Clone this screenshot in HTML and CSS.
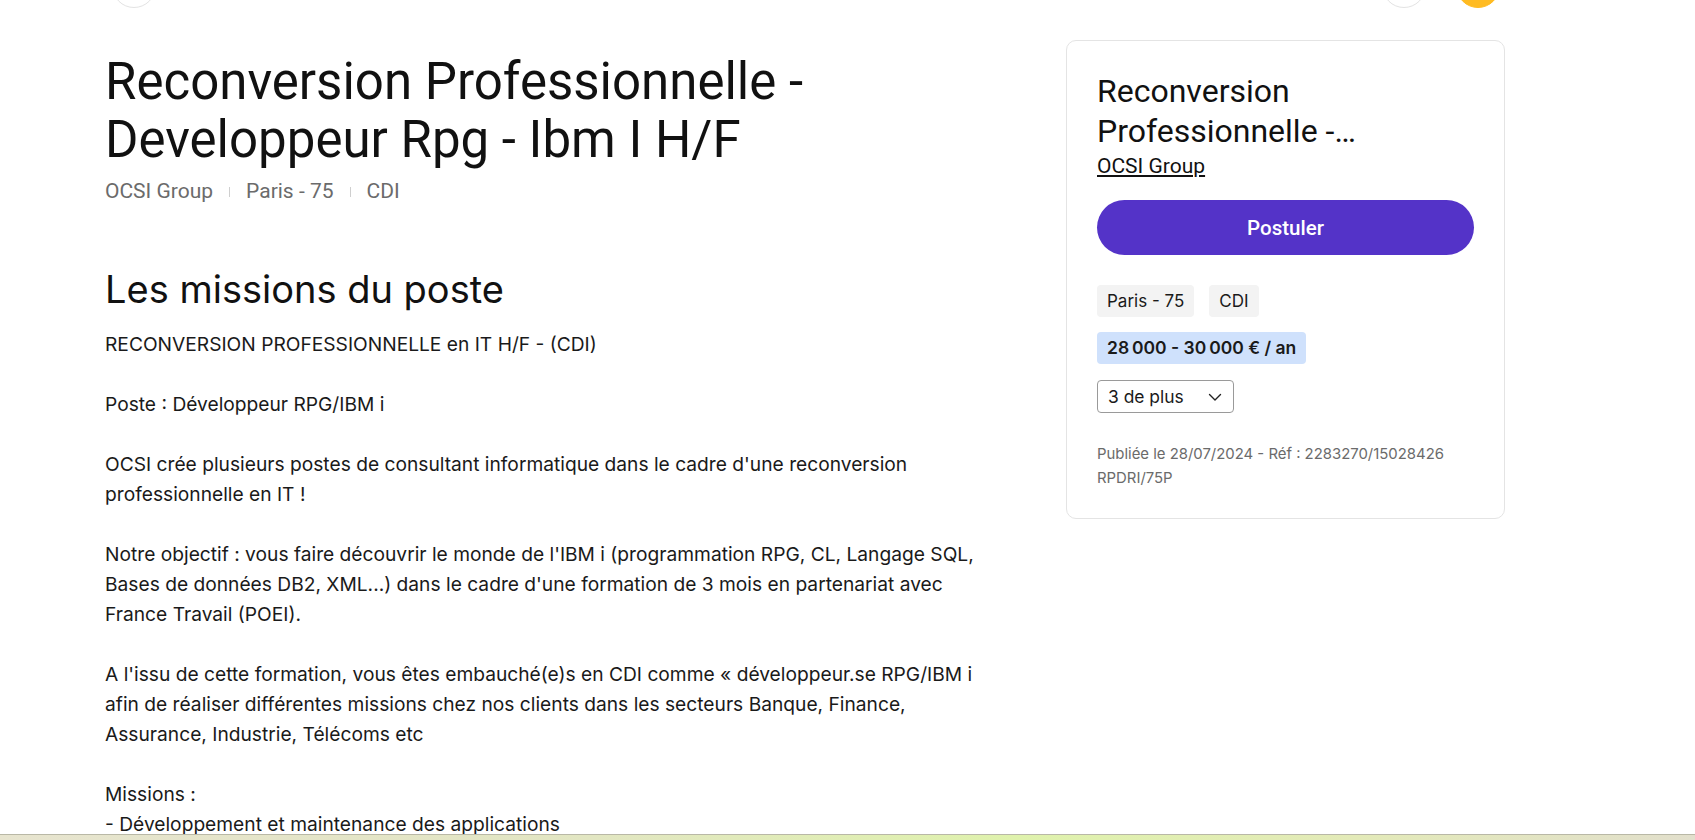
FILE: index.html
```html
<!DOCTYPE html>
<html lang="fr">
<head>
<meta charset="utf-8">
<title>Reconversion Professionnelle - Developpeur Rpg - Ibm I H/F</title>
<link rel="stylesheet" href="styles.css">
</head>
<body>
<header class="topbar">
  <span class="round-btn"></span>
  <div class="topbar-right">
    <span class="round-btn"></span>
    <span class="round-btn avatar"></span>
  </div>
</header>
<main class="layout">
  <section class="offer">
    <h1 class="offer-title">Reconversion Professionnelle - Developpeur Rpg - Ibm I H/F</h1>
    <ul class="offer-meta">
      <li>OCSI Group</li>
      <li>Paris - 75</li>
      <li>CDI</li>
    </ul>
    <h2 class="section-title">Les missions du poste</h2>
    <p class="offer-text">RECONVERSION PROFESSIONNELLE en IT H/F - (CDI)

Poste : Développeur RPG/IBM i

OCSI crée plusieurs postes de consultant informatique dans le cadre d'une reconversion professionnelle en IT !

Notre objectif : vous faire découvrir le monde de l'IBM i (programmation RPG, CL, Langage SQL, Bases de données DB2, XML...) dans le cadre d'une formation de 3 mois en partenariat avec France Travail (POEI).

A l'issu de cette formation, vous êtes embauché(e)s en CDI comme « développeur.se RPG/IBM i afin de réaliser différentes missions chez nos clients dans les secteurs Banque, Finance, Assurance, Industrie, Télécoms etc

Missions :
- Développement et maintenance des applications
- Analyse des besoins et rédaction des spécifications
- Tests et recette</p>
  </section>
  <aside class="card">
    <h2 class="card-title">Reconversion Professionnelle - Developpeur Rpg - Ibm I H/F</h2>
    <a class="card-company" href="#">OCSI Group</a>
    <button class="apply-btn" type="button">Postuler</button>
    <div class="tags">
      <span class="tag">Paris - 75</span>
      <span class="tag">CDI</span>
    </div>
    <div class="tags">
      <span class="tag tag-salary">28&#8239;000 - 30&#8239;000 € / an</span>
    </div>
    <button class="more-btn" type="button">3 de plus
      <svg width="16" height="16" viewBox="0 0 16 16" aria-hidden="true"><path d="M2.5 5.5 8 11l5.5-5.5" fill="none" stroke="#222" stroke-width="1.4" stroke-linecap="round" stroke-linejoin="round"/></svg>
    </button>
    <p class="card-ref">Publiée le 28/07/2024 - Réf : 2283270/15028426 RPDRI/75P</p>
  </aside>
</main>
<div class="screen-edge"></div>
</body>
</html>
```
FILE: styles.css
```css
* { box-sizing: border-box; }

html, body {
  margin: 0;
  padding: 0;
  background: #fff;
  color: #1a1a1a;
  font-family: Inter, "Noto Sans", sans-serif;
}

.topbar {
  display: flex;
  justify-content: space-between;
  align-items: center;
  height: 44px;
  margin: -36px 195px 0 112px;
}

.topbar-right {
  display: flex;
  gap: 30px;
}

.round-btn {
  display: block;
  width: 44px;
  height: 44px;
  border-radius: 50%;
  border: 1px solid #e3e3e3;
  background: #fff;
}

.round-btn.avatar {
  background: #ffbb22;
  border-color: #ffbb22;
}

.layout {
  display: grid;
  grid-template-columns: 903px 439px;
  column-gap: 58px;
  align-items: start;
  margin: 32px 0 0 105px;
}

.offer-title {
  margin: 13px 0 0;
  font-family: Roboto, "Liberation Sans", sans-serif;
  font-weight: 400;
  font-size: 51px;
  line-height: 58px;
  color: #111;
  width: 760px;
}

.offer-meta {
  display: flex;
  align-items: center;
  list-style: none;
  margin: 10px 0 0;
  padding: 0;
  font-family: Roboto, "Liberation Sans", sans-serif;
  font-size: 21px;
  color: #6b6b6b;
}

.offer-meta li + li::before {
  content: "";
  display: inline-block;
  width: 1px;
  height: 10px;
  background: #cfcfcf;
  margin: 0 16px;
  vertical-align: middle;
}

.section-title {
  margin: 62px 0 0;
  font-weight: 400;
  font-size: 38px;
  line-height: 48px;
  color: #111;
}

.offer-text {
  margin: 16px 0 0;
  white-space: pre-line;
  font-size: 19.2px;
  line-height: 30px;
  color: #1a1a1a;
}

.card {
  border: 1px solid #e4e4e4;
  border-radius: 10px;
  padding: 30px 30px 28px;
  background: #fff;
}

.card-title {
  margin: 0;
  font-family: Roboto, "Liberation Sans", sans-serif;
  font-weight: 400;
  font-size: 32px;
  line-height: 40px;
  color: #111;
  display: -webkit-box;
  -webkit-line-clamp: 2;
  -webkit-box-orient: vertical;
  overflow: hidden;
}

.card-company {
  display: inline-block;
  margin-top: 3px;
  font-family: Roboto, "Liberation Sans", sans-serif;
  font-size: 21px;
  line-height: 24px;
  color: #111;
  text-decoration: underline;
  text-underline-offset: 2px;
}

.apply-btn {
  display: block;
  width: 100%;
  height: 55px;
  margin-top: 22px;
  border: 0;
  border-radius: 28px;
  background: #5433c8;
  color: #fff;
  font-family: Roboto, "Liberation Sans", sans-serif;
  font-size: 20.5px;
  font-weight: 500;
}

.tags {
  display: flex;
  gap: 15px;
  margin-top: 30px;
}

.tags + .tags {
  margin-top: 15px;
}

.tag {
  display: inline-block;
  padding: 0 10px;
  height: 32px;
  line-height: 32px;
  border-radius: 4px;
  background: #f3f3f3;
  font-size: 17px;
  color: #1a1a1a;
}

.tag-salary {
  background: #cfe1fc;
  font-size: 17.5px;
  font-weight: 600;
}

.more-btn {
  display: flex;
  align-items: center;
  justify-content: space-between;
  width: 137px;
  height: 33px;
  margin-top: 16px;
  padding: 0 10px;
  border: 1px solid #9a9a9a;
  border-radius: 4px;
  background: #fff;
  font-family: Inter, "Noto Sans", sans-serif;
  font-size: 17.4px;
  color: #1a1a1a;
}

.card-ref {
  margin: 29px 0 0;
  font-size: 14.9px;
  line-height: 24px;
  color: #6b6b6b;
}

.screen-edge {
  position: fixed;
  left: 0;
  right: 0;
  bottom: 0;
  height: 6px;
  border-top: 1px solid #b9b8a6;
  background: linear-gradient(90deg, #e7e4cf 0%, #e2e6c2 35%, #dff2ac 60%, #e3eab8 80%, #e2dfcc 100%);
}
```
